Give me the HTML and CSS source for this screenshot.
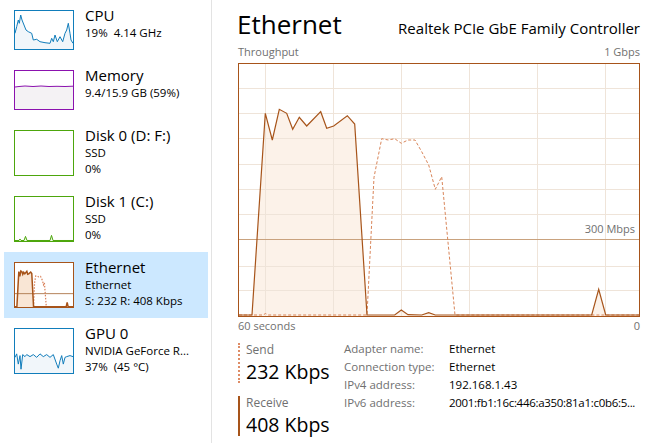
FILE: index.html
```html
<!DOCTYPE html>
<html lang="en">
<head>
<meta charset="utf-8">
<title>Task Manager - Ethernet</title>
<link rel="stylesheet" href="styles.css">
</head>
<body>
<div class="app">
  <aside class="sidebar">
    <div class="item item-short">
      <div class="thumb thumb-cpu">
        <svg viewBox="0 0 58 38" preserveAspectRatio="none">
          <polygon class="fill" points="0,38 0,22.3 1.7,15.7 3.3,9 4.3,12.3 5.7,4 7,9 9,14 11,19 13.3,20.7 16.7,22.3 18.3,29 21.7,28.3 25,30.7 30,31.7 35,32.3 36.7,27.3 38.3,30.7 40,24 42.3,30.7 45,25.7 47.7,30.7 50,22.3 51.7,19 53.3,12.3 55,22.3 56,29 58,32.3 58,38"/>
          <polyline class="line" points="0,22.3 1.7,15.7 3.3,9 4.3,12.3 5.7,4 7,9 9,14 11,19 13.3,20.7 16.7,22.3 18.3,29 21.7,28.3 25,30.7 30,31.7 35,32.3 36.7,27.3 38.3,30.7 40,24 42.3,30.7 45,25.7 47.7,30.7 50,22.3 51.7,19 53.3,12.3 55,22.3 56,29 58,32.3"/>
        </svg>
      </div>
      <div class="info">
        <div class="name">CPU</div>
        <div class="sub">19%&nbsp; 4.14 GHz</div>
      </div>
    </div>
    <div class="item item-short">
      <div class="thumb thumb-mem">
        <svg viewBox="0 0 58 38" preserveAspectRatio="none">
          <polygon class="fill" points="0,38 0,16 4,15.5 10,15 18,15.5 26,15 34,15.5 42,15.3 50,15.5 58,15.2 58,38"/>
          <polyline class="line" points="0,16 4,15.5 10,15 18,15.5 26,15 34,15.5 42,15.3 50,15.5 58,15.2"/>
        </svg>
      </div>
      <div class="info">
        <div class="name">Memory</div>
        <div class="sub">9.4/15.9 GB (59%)</div>
      </div>
    </div>
    <div class="item">
      <div class="thumb thumb-disk"></div>
      <div class="info">
        <div class="name">Disk 0 (D: F:)</div>
        <div class="sub">SSD</div>
        <div class="sub">0%</div>
      </div>
    </div>
    <div class="item">
      <div class="thumb thumb-disk">
        <svg viewBox="0 0 58 43" preserveAspectRatio="none">
          <polygon class="fill" points="0,43 0,42.5 4,42.5 5,41 6,42.5 9,42.5 10.5,38.5 12,42.5 35,42.5 36.5,37.5 38,42.5 58,42.5 58,43"/>
          <polyline class="line" points="0,42.5 4,42.5 5,41 6,42.5 9,42.5 10.5,38.5 12,42.5 35,42.5 36.5,37.5 38,42.5 58,42.5"/>
        </svg>
      </div>
      <div class="info">
        <div class="name">Disk 1 (C:)</div>
        <div class="sub">SSD</div>
        <div class="sub">0%</div>
      </div>
    </div>
    <div class="item selected">
      <div class="thumb thumb-eth">
        <svg viewBox="0 0 400 252" preserveAspectRatio="none">
          <polygon class="fill" points="0,251 13,251 26.3,49.3 33.3,76 40.3,45.3 47.7,49.3 53.7,65.3 60.3,53.3 67.7,62 81.7,47.7 87.7,64.3 94.7,62 108.3,51.7 115.7,60 128,251 352.7,251 359.7,225.3 366.7,251 400,251 400,252 0,252"/>
          <line class="mark-line" x1="0" y1="175.5" x2="400" y2="175.5"/>
          <polyline class="send" points="128,251 135,113.3 142.7,74.7 149.3,76 155.7,74.7 162.3,79.3 169,76 176,76 182.7,87.7 189.7,101 196.3,125.3 202.7,112.7 216,251"/>
          <polyline class="line" points="0,251 13,251 26.3,49.3 33.3,76 40.3,45.3 47.7,49.3 53.7,65.3 60.3,53.3 67.7,62 81.7,47.7 87.7,64.3 94.7,62 108.3,51.7 115.7,60 128,251 352.7,251 359.7,225.3 366.7,251 400,251"/>
        </svg>
      </div>
      <div class="info">
        <div class="name">Ethernet</div>
        <div class="sub">Ethernet</div>
        <div class="sub">S: 232 R: 408 Kbps</div>
      </div>
    </div>
    <div class="item">
      <div class="thumb thumb-gpu">
        <svg viewBox="0 0 58 43" preserveAspectRatio="none">
          <polygon class="fill" points="0,43 0,27.7 1.7,24.3 3.3,34.3 5,26 6,39.3 7.7,25 10,27 11.7,25 15,27 18.3,25 21.7,27.7 25,24.3 28.3,27 31.7,25 35,27.7 38.3,25 41.7,34.3 43.3,38.3 45,31 46.7,26 48.3,34.3 50,27.7 51.7,27 55,26 58,27 58,43"/>
          <polyline class="line" points="0,27.7 1.7,24.3 3.3,34.3 5,26 6,39.3 7.7,25 10,27 11.7,25 15,27 18.3,25 21.7,27.7 25,24.3 28.3,27 31.7,25 35,27.7 38.3,25 41.7,34.3 43.3,38.3 45,31 46.7,26 48.3,34.3 50,27.7 51.7,27 55,26 58,27"/>
        </svg>
      </div>
      <div class="info">
        <div class="name">GPU 0</div>
        <div class="sub">NVIDIA GeForce R...</div>
        <div class="sub">37%&nbsp; (45 °C)</div>
      </div>
    </div>
  </aside>

  <main class="main">
    <header class="head">
      <h1 class="title">Ethernet</h1>
      <div class="adapter">Realtek PCIe GbE Family Controller</div>
    </header>
    <div class="axis axis-top"><span>Throughput</span><span>1 Gbps</span></div>
    <div class="graph">
      <svg viewBox="0 0 400 252" width="400" height="252">
        <polygon class="g-fill" points="0,251 13,251 26.3,49.3 33.3,76 40.3,45.3 47.7,49.3 53.7,65.3 60.3,53.3 67.7,62 81.7,47.7 87.7,64.3 94.7,62 108.3,51.7 115.7,60 128,251 155.7,251 162.3,246 169,250.7 182.7,251 189.7,248.7 196.3,251 352.7,251 359.7,225.3 366.7,251 400,251 400,252 0,252"/>
        <g class="grid">
          <line x1="26.5" y1="0" x2="26.5" y2="252"/>
          <line x1="94.5" y1="0" x2="94.5" y2="252"/>
          <line x1="162.5" y1="0" x2="162.5" y2="252"/>
          <line x1="230.5" y1="0" x2="230.5" y2="252"/>
          <line x1="298.5" y1="0" x2="298.5" y2="252"/>
          <line x1="366.5" y1="0" x2="366.5" y2="252"/>
          <line x1="0" y1="24.5" x2="400" y2="24.5"/>
          <line x1="0" y1="49.5" x2="400" y2="49.5"/>
          <line x1="0" y1="74.5" x2="400" y2="74.5"/>
          <line x1="0" y1="100.5" x2="400" y2="100.5"/>
          <line x1="0" y1="125.5" x2="400" y2="125.5"/>
          <line x1="0" y1="150.5" x2="400" y2="150.5"/>
          <line x1="0" y1="202.5" x2="400" y2="202.5"/>
          <line x1="0" y1="226.5" x2="400" y2="226.5"/>
        </g>
        <line class="g-mark" x1="0" y1="175.5" x2="400" y2="175.5"/>
        <polyline class="g-send" points="0,251 24,251 26.5,249.5 29,251 128,251 135,113.3 142.7,74.7 149.3,76 155.7,74.7 162.3,79.3 169,76 176,76 182.7,87.7 189.7,101 196.3,125.3 202.7,112.7 216,251 400,251"/>
        <polyline class="g-recv" points="0,251 13,251 26.3,49.3 33.3,76 40.3,45.3 47.7,49.3 53.7,65.3 60.3,53.3 67.7,62 81.7,47.7 87.7,64.3 94.7,62 108.3,51.7 115.7,60 128,251 155.7,251 162.3,246 169,250.7 182.7,251 189.7,248.7 196.3,251 352.7,251 359.7,225.3 366.7,251 400,251"/>
      </svg>
      <span class="mark-label">300 Mbps</span>
    </div>
    <div class="axis axis-bottom"><span>60 seconds</span><span>0</span></div>

    <section class="stats">
      <div class="rates">
        <div class="rate rate-send">
          <div class="rate-label">Send</div>
          <div class="rate-value">232 Kbps</div>
        </div>
        <div class="rate rate-recv">
          <div class="rate-label">Receive</div>
          <div class="rate-value">408 Kbps</div>
        </div>
      </div>
      <dl class="details">
        <dt>Adapter name:</dt><dd>Ethernet</dd>
        <dt>Connection type:</dt><dd>Ethernet</dd>
        <dt>IPv4 address:</dt><dd>192.168.1.43</dd>
        <dt>IPv6 address:</dt><dd class="ipv6">2001:fb1:16c:446:a350:81a1:c0b6:5...</dd>
      </dl>
    </section>
  </main>
</div>
</body>
</html>
```
FILE: styles.css
```css
* { box-sizing: border-box; }

html, body {
  margin: 0;
  padding: 0;
  background: #ffffff;
}

body {
  width: 660px;
  height: 443px;
  overflow: hidden;
  font-family: "Open Sans", "Noto Sans", sans-serif;
  color: #000;
}

.app {
  display: flex;
  height: 443px;
}

/* ---------- sidebar ---------- */
.sidebar {
  width: 212px;
  flex: none;
  border-right: 1px solid #e3e3e3;
  padding: 0 3px 0 4px;
}

.item {
  display: flex;
  height: 66px;
  padding: 10px 0 0 10px;
}

.item-short { height: 60px; }

.item.selected { background: #cce8ff; }

.thumb {
  width: 60px;
  height: 46px;
  flex: none;
  border: 1px solid;
  background: #fff;
}

.item-short .thumb { height: 40px; }

.thumb svg {
  display: block;
  width: 100%;
  height: 100%;
}

.thumb .line {
  fill: none;
  stroke-width: 1;
  vector-effect: non-scaling-stroke;
}

.thumb-cpu { border-color: #117dbb; }
.thumb-cpu .fill { fill: #f1f6fa; }
.thumb-cpu .line { stroke: #117dbb; }

.thumb-gpu { border-color: #117dbb; }
.thumb-gpu .fill { fill: #f1f6fa; }
.thumb-gpu .line { stroke: #117dbb; }

.thumb-mem { border-color: #8b12ae; }
.thumb-mem .fill { fill: #f4f2f4; }
.thumb-mem .line { stroke: #8b12ae; }

.thumb-disk { border-color: #4da60c; }
.thumb-disk .fill { fill: #eff7e9; }
.thumb-disk .line { stroke: #4da60c; }

.thumb-eth { border-color: #a7541a; }
.thumb-eth .fill { fill: #f9e6d5; }
.thumb-eth .line { stroke: #a7541a; stroke-width: 1.5; }
.thumb-eth .send {
  fill: none;
  stroke: #d9825b;
  stroke-width: 1.2;
  stroke-dasharray: 1.5 1.5;
  vector-effect: non-scaling-stroke;
}
.thumb-eth .mark-line {
  stroke: #b5835a;
  stroke-width: 1;
  vector-effect: non-scaling-stroke;
}

.info {
  margin-left: 11px;
  white-space: nowrap;
}

.name {
  font-size: 15px;
  line-height: 20px;
  margin-top: -5px;
}

.sub {
  font-size: 11.5px;
  line-height: 16px;
}

/* ---------- main ---------- */
.main {
  flex: 1;
  padding: 0 20px 0 26px;
  min-width: 0;
}

.head {
  display: flex;
  justify-content: space-between;
  align-items: baseline;
  padding-top: 7px;
}

.title {
  margin: 0 0 0 -1px;
  font-size: 26px;
  font-weight: 400;
  line-height: 34px;
}

.adapter {
  font-size: 15px;
  line-height: 20px;
}

.axis {
  display: flex;
  justify-content: space-between;
  font-size: 11px;
  line-height: 16px;
  color: #707070;
}

.axis-top { margin-top: 3px; }
.axis-bottom { margin-top: 1px; }

.graph {
  position: relative;
  margin-top: 3px;
  width: 402px;
  height: 254px;
  border: 1px solid #a7541a;
}

.graph svg { display: block; }

.g-fill { fill: #fcf2e9; }

.grid line {
  stroke: #efe4d9;
  stroke-width: 1;
}

.g-mark {
  stroke: #c9a27e;
  stroke-width: 1;
}

.g-send {
  fill: none;
  stroke: #d98559;
  stroke-width: 1;
  stroke-dasharray: 3 2;
}

.g-recv {
  fill: none;
  stroke: #a7541a;
  stroke-width: 1.2;
  stroke-linejoin: miter;
}

.mark-label {
  position: absolute;
  right: 4px;
  top: 158px;
  font-size: 11px;
  line-height: 14px;
  color: #707070;
}

/* ---------- stats ---------- */
.stats {
  display: flex;
  margin-top: 9px;
}

.rates {
  width: 106px;
  flex: none;
  display: flex;
  flex-direction: column;
  gap: 13px;
}

.rate {
  height: 40px;
  padding-left: 6px;
  border-left: 2px solid #a7541a;
}

.rate-send { border-left: 2px dotted #de8c66; }

.rate-label {
  font-size: 12px;
  line-height: 14px;
  color: #707070;
}

.rate-value {
  margin-top: 3px;
  font-size: 19.5px;
  line-height: 24px;
  white-space: nowrap;
}

.details {
  margin: -3px 0 0 0;
  display: grid;
  grid-template-columns: 105px auto;
  grid-auto-rows: 18px;
  font-size: 11.5px;
  line-height: 18px;
  white-space: nowrap;
}

.details dt {
  color: #707070;
}

.details dd {
  margin: 0;
  color: #000;
}

.details .ipv6 {
  letter-spacing: -0.3px;
}
```
